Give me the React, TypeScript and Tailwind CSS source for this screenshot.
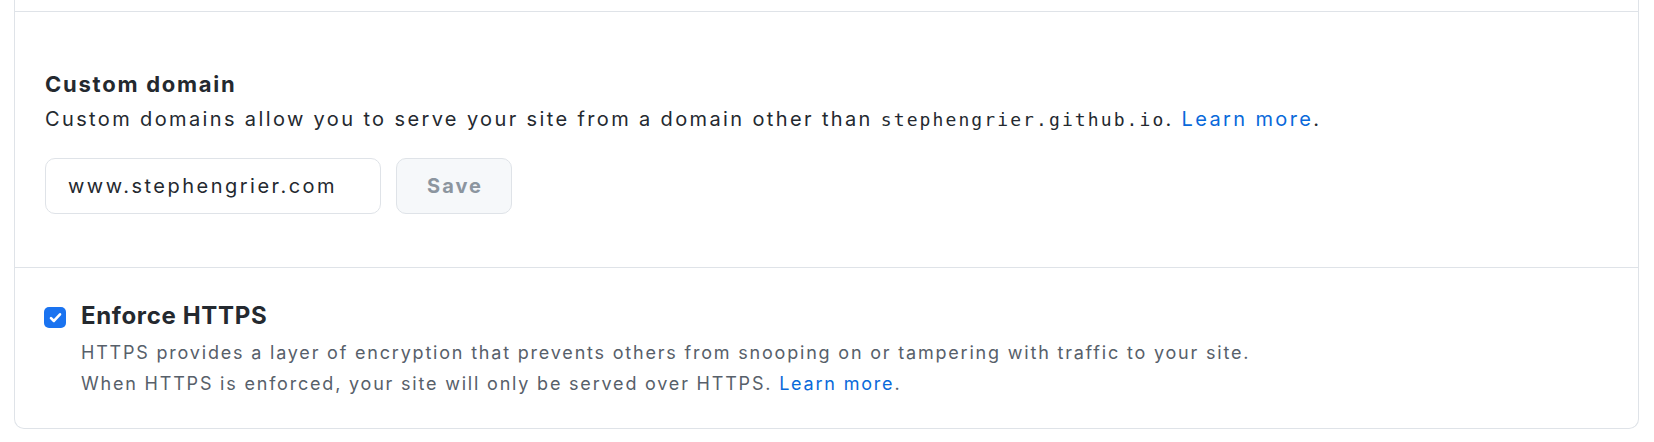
const sans = { fontFamily: 'Inter, "Noto Sans", sans-serif' }

export default function App() {
  return (
    <div className="min-h-[442px] bg-white pl-[14px] pr-[14px]" style={sans}>
      <div className="w-[1625px] rounded-b-[10px] border-x border-b border-[#dfe3e8]">
        <div className="h-[12px] border-b border-[#dfe3e8]" />

        <section className="border-b border-[#dfe3e8] pl-[30px] pt-[57px] pb-[53px]">
          <h2 className="text-[22px] leading-[30px] font-bold tracking-[1.75px] text-[#24292f]">Custom domain</h2>
          <p className="mt-[6px] text-[20px] leading-[28px] tracking-[2.37px] text-[#24292f]">
            Custom domains allow you to serve your site from a domain other than{' '}
            <code className="font-['DejaVu_Sans_Mono',monospace] text-[18px] tracking-[2.1px]">stephengrier.github.io</code>.{' '}
            <a className="text-[#0969da]">Learn more</a>.
          </p>
          <div className="mt-[24px] flex gap-[15px]">
            <div className="flex h-[56px] w-[336px] items-center rounded-[10px] border border-[#dfe3e8] px-[22px] text-[20px] tracking-[2.5px] text-[#24292f]">
              www.stephengrier.com
            </div>
            <button className="h-[56px] w-[116px] rounded-[10px] border border-[#dfe3e8] bg-[#f6f8fa] pl-[2px] text-[20px] font-bold tracking-[2px] text-[#8c959f]">
              Save
            </button>
          </div>
        </section>

        <section className="pl-[29px] pt-[32px] pb-[29px]">
          <div className="flex items-start gap-[15px]">
            <div className="mt-[7px] flex h-[21px] w-[22px] items-center justify-center rounded-[5px] bg-[#1a73f0]">
              <svg width="15" height="15" viewBox="0 0 16 16">
                <path d="M3.2 8.6l3.1 3.1L12.8 4.6" fill="none" stroke="#fff" strokeWidth="2.8" strokeLinecap="round" strokeLinejoin="round" />
              </svg>
            </div>
            <div>
              <div className="text-[24px] leading-[32px] font-bold tracking-[0.65px] text-[#24292f]">Enforce HTTPS</div>
              <p className="mt-[5px] text-[18px] leading-[31px] tracking-[1.8px] text-[#57606a]">
                HTTPS provides a layer of encryption that prevents others from snooping on or tampering with traffic to your site.
                <br />
                When HTTPS is enforced, your site will only be served over HTTPS. <a className="text-[#0969da]">Learn more</a>.
              </p>
            </div>
          </div>
        </section>
      </div>
    </div>
  )
}
